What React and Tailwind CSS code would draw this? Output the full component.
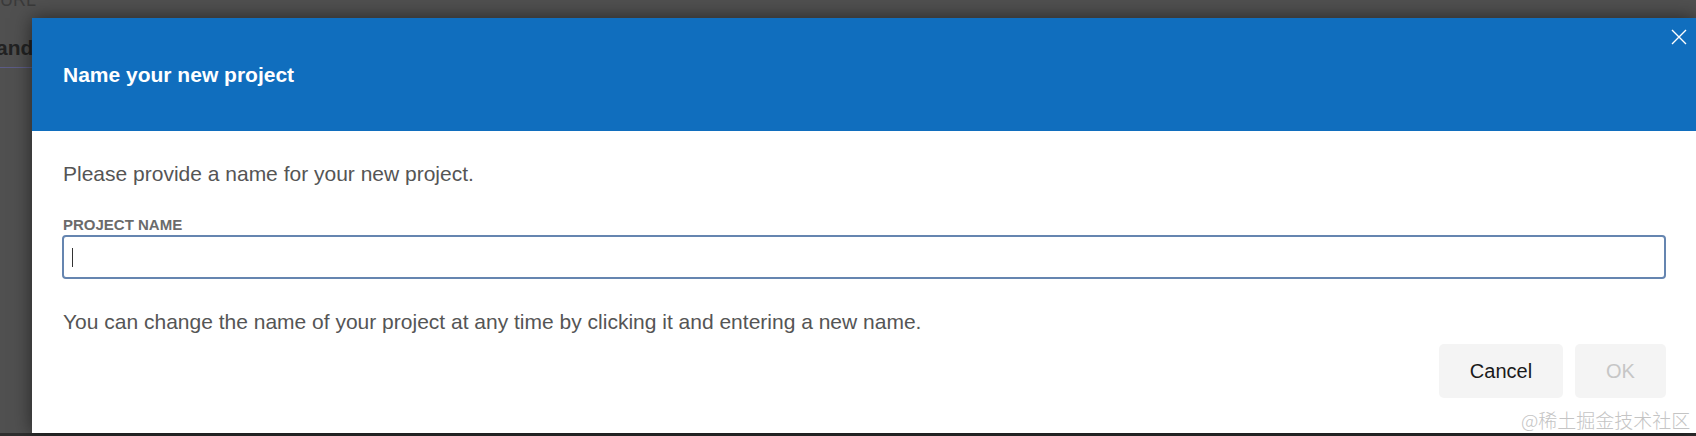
export default function App() {
  return (
    <div
      className="relative w-[1696px] h-[436px] overflow-hidden bg-[#505050] flex flex-col"
      style={{ fontFamily: '"Liberation Sans", Arial, sans-serif' }}
    >
      {/* background page */}
      <div className="flex-1 flex flex-col">
        <div className="-mt-[10px] text-[18px] leading-[20px] text-[#3a3a3a]">URL</div>
        <div className="mt-[18px] h-[40px] border-b border-[#5c5c86] flex items-center">
          <span className="-ml-[4px] text-[21px] font-bold text-[#222]">and</span>
        </div>
      </div>
      <div className="h-[3px] bg-[#2e2e2e]" />

      {/* modal */}
      <div className="absolute left-[32px] top-[18px] right-0 bottom-[3px] bg-white flex flex-col shadow-[0_0_18px_rgba(0,0,0,0.55)]">
        <div className="relative h-[113px] bg-[#106ebe] flex items-center px-[31px]">
          <h2 className="text-[21px] font-bold text-white leading-[24px]">Name your new project</h2>
          <button className="absolute right-[9px] top-[11px] w-[16px] h-[16px] flex items-center justify-center">
            <svg width="16" height="16" viewBox="0 0 16 16" fill="none" stroke="white" strokeWidth="1.4">
              <path d="M1 1 L15 15 M15 1 L1 15" />
            </svg>
          </button>
        </div>
        <div className="flex flex-col px-[30px] pt-[31px]">
          <p className="pl-[1px] text-[21px] leading-[24px] text-[#555]">Please provide a name for your new project.</p>
          <label className="mt-[30px] pl-[1px] text-[15px] leading-[17px] font-bold text-[#6b6b6b]">PROJECT NAME</label>
          <div className="mt-[2px] h-[44px] rounded-[4px] border-2 border-[#6585b0] flex items-center pl-[8px]">
            <div className="w-[1px] h-[19px] bg-[#333]" />
          </div>
          <p className="mt-[31px] pl-[1px] text-[21px] leading-[24px] text-[#555]">
            You can change the name of your project at any time by clicking it and entering a new name.
          </p>
          <div className="mt-[10px] flex justify-end gap-[12px]">
            <button className="w-[124px] h-[54px] rounded-[5px] bg-[#f4f4f4] text-[20px] text-[#1a1a1a]">Cancel</button>
            <button className="w-[91px] h-[54px] rounded-[5px] bg-[#f4f4f4] text-[20px] text-[#c6c6c6]">OK</button>
          </div>
        </div>
      </div>

      {/* watermark */}
      <div
        className="absolute left-[1521px] top-[409px] text-[19px] leading-[21px] text-[#c4c4c4] font-light"
        style={{ fontFamily: '"Noto Sans CJK SC", "Liberation Sans", sans-serif' }}
      >
        @稀土掘金技术社区
      </div>
    </div>
  );
}
